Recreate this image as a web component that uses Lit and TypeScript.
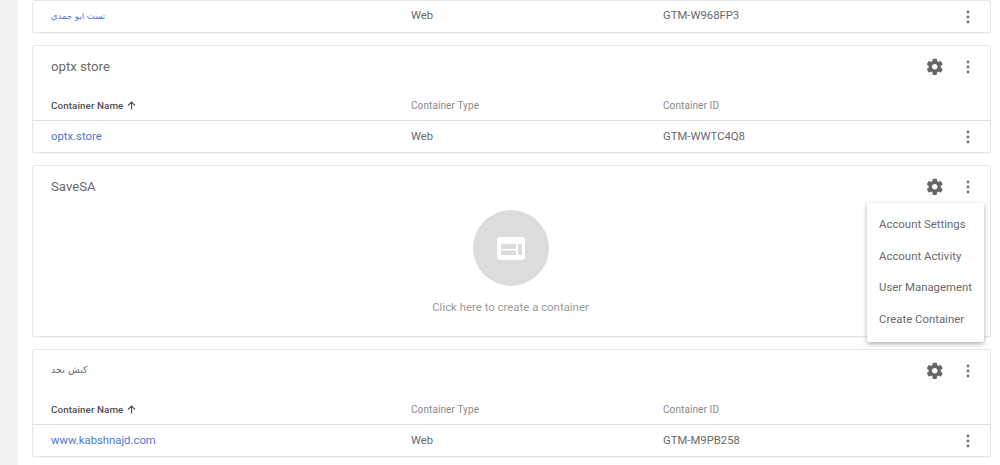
import { LitElement, css, html, nothing } from 'lit';
import { customElement } from 'lit/decorators.js';

interface Account {
  name: string;
  rows: { name: string; id: string }[];
  headless?: boolean;
  arabic?: boolean;
}

const ACCOUNTS: Account[] = [
  { name: '', headless: true, rows: [{ name: 'تست ابو حمدي', id: 'GTM-W968FP3' }] },
  { name: 'optx store', rows: [{ name: 'optx.store', id: 'GTM-WWTC4Q8' }] },
  { name: 'SaveSA', rows: [] },
  { name: 'كبش نجد', arabic: true, rows: [{ name: 'www.kabshnajd.com', id: 'GTM-M9PB258' }] },
];

const MENU = ['Account Settings', 'Account Activity', 'User Management', 'Create Container'];

const dots = html`<svg class="dots" viewBox="0 0 4 14" width="4" height="14">
  <circle cx="2" cy="2" r="1.4"></circle>
  <circle cx="2" cy="7" r="1.4"></circle>
  <circle cx="2" cy="12" r="1.4"></circle>
</svg>`;

const gear = html`<svg class="gear" viewBox="0 0 24 24" width="19.5" height="19.5">
  <path
    d="M19.43 12.98c.04-.32.07-.64.07-.98s-.03-.66-.07-.98l2.11-1.65c.19-.15.24-.42.12-.64l-2-3.46c-.12-.22-.39-.3-.61-.22l-2.49 1c-.52-.4-1.08-.73-1.69-.98l-.38-2.65C14.46 2.18 14.25 2 14 2h-4c-.25 0-.46.18-.49.42l-.38 2.65c-.61.25-1.17.59-1.69.98l-2.49-1c-.23-.09-.49 0-.61.22l-2 3.46c-.13.22-.07.49.12.64l2.11 1.65c-.04.32-.07.65-.07.98s.03.66.07.98l-2.11 1.65c-.19.15-.24.42-.12.64l2 3.46c.12.22.39.3.61.22l2.49-1c.52.4 1.08.73 1.69.98l.38 2.65c.03.24.24.42.49.42h4c.25 0 .46-.18.49-.42l.38-2.65c.61-.25 1.17-.59 1.69-.98l2.49 1c.23.09.49 0 .61-.22l2-3.46c.12-.22.07-.49-.12-.64l-2.11-1.65zM12 15.5c-1.93 0-3.5-1.57-3.5-3.5s1.57-3.5 3.5-3.5 3.5 1.57 3.5 3.5-1.57 3.5-3.5 3.5z"
  ></path>
</svg>`;

@customElement('app-root')
export class AppRoot extends LitElement {
  static styles = css`
    :host {
      display: block;
      position: relative;
      height: 465px;
      overflow: hidden;
      background: #fff;
      font-family: Roboto, 'Noto Sans', sans-serif;
      color: #6a6a6a;
    }
    .page {
      display: flex;
      height: 100%;
    }
    .side {
      width: 18px;
      flex: none;
      background: #f2f2f2;
    }
    .list {
      width: 959px;
      margin-left: 14px;
      display: flex;
      flex-direction: column;
      gap: 12px;
    }
    .card {
      background: #fff;
      border: 1px solid #e6e6e6;
      border-radius: 2px;
      box-shadow: 0 1px 1px rgba(0, 0, 0, 0.04);
    }
    .head {
      height: 41px;
      display: flex;
      align-items: center;
      padding-left: 18px;
      font-size: 13.2px;
    }
    .head.arabic .title {
      font-family: 'DejaVu Sans', sans-serif;
      font-size: 9.6px;
      padding-bottom: 3px;
    }
    .title {
      flex: 1;
    }
    .gear {
      display: block;
      fill: #666;
      margin-right: 22px;
    }
    .dots {
      display: block;
      fill: #707070;
    }
    .head .dots {
      margin-right: 20px;
    }
    .cols,
    .row {
      display: grid;
      grid-template-columns: 360px 252px 1fr 4px;
      align-items: center;
      padding: 0 20px 0 18px;
    }
    .cols {
      height: 34px;
      padding-top: 4px;
      box-sizing: border-box;
      border-bottom: 1px solid #e0e0e0;
      font-size: 10px;
      letter-spacing: 0.1px;
      color: #8a8a8a;
    }
    .cols .first {
      display: flex;
      align-items: center;
      gap: 4px;
      color: #4f4f4f;
      font-size: 9.8px;
      font-weight: 500;
    }
    .arrow {
      display: block;
      stroke: #4f4f4f;
      stroke-width: 1.1;
      fill: none;
    }
    .row {
      height: 31px;
      font-size: 11.3px;
    }
    .headless .row .text {
      padding-bottom: 2px;
    }
    .link {
      color: #4a78d8;
    }
    .link.arabic {
      font-family: 'DejaVu Sans', sans-serif;
      font-size: 8.5px;
    }
    .empty {
      height: 129px;
      display: flex;
      flex-direction: column;
      align-items: center;
      padding-right: 2px;
      font-size: 11.4px;
      color: #9a9a9a;
    }
    .circle {
      width: 76px;
      height: 76px;
      border-radius: 50%;
      background: #dcdcdc;
      display: flex;
      align-items: center;
      justify-content: center;
      margin-top: 3px;
      margin-bottom: 14px;
    }
    .circle svg {
      display: block;
    }
    .menu {
      position: absolute;
      left: 867px;
      top: 203px;
      width: 117px;
      height: 139px;
      box-sizing: border-box;
      padding: 6px 0;
      background: #fff;
      border-radius: 2px;
      box-shadow: 0 2px 5px rgba(0, 0, 0, 0.32);
      font-size: 11.4px;
    }
    .menu div {
      height: 31.5px;
      line-height: 31.5px;
      padding-left: 12px;
      white-space: nowrap;
    }
  `;

  private _renderCard(a: Account) {
    return html`
      <div class="card ${a.headless ? 'headless' : ''}">
        ${a.headless
          ? nothing
          : html`<div class="head ${a.arabic ? 'arabic' : ''}">
              <span class="title">${a.name}</span>${gear}${dots}
            </div>`}
        ${a.rows.length && !a.headless
          ? html`<div class="cols">
              <span class="first">
                Container Name
                <svg class="arrow" viewBox="0 0 9 9" width="9" height="9">
                  <path d="M4.5 8.5V1M1 4.5L4.5 1 8 4.5"></path>
                </svg>
              </span>
              <span>Container Type</span>
              <span>Container ID</span>
              <span></span>
            </div>`
          : nothing}
        ${a.rows.map(
          (r) => html`<div class="row">
            <span class="text link ${a.headless ? 'arabic' : ''}">${r.name}</span>
            <span class="text">Web</span>
            <span class="text">${r.id}</span>
            ${dots}
          </div>`,
        )}
        ${a.rows.length
          ? nothing
          : html`<div class="empty">
              <div class="circle">
                <svg viewBox="0 0 28 23" width="28" height="23">
                  <rect width="28" height="23" rx="3" fill="#fff"></rect>
                  <rect x="4" y="7" width="15" height="5" fill="#dcdcdc"></rect>
                  <rect x="4" y="13.5" width="15" height="4.5" fill="#dcdcdc"></rect>
                  <rect x="21" y="7" width="4" height="11" fill="#dcdcdc"></rect>
                </svg>
              </div>
              Click here to create a container
            </div>`}
      </div>
    `;
  }

  render() {
    return html`
      <div class="page">
        <div class="side"></div>
        <div class="list">${ACCOUNTS.map((a) => this._renderCard(a))}</div>
      </div>
      <div class="menu">${MENU.map((m) => html`<div>${m}</div>`)}</div>
    `;
  }
}
